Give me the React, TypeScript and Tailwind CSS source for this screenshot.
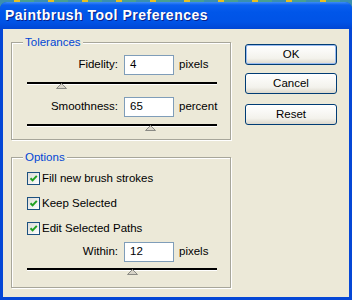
import React from 'react';

const font = "font-['Liberation_Sans',Arial,sans-serif]";

function Thumb() {
  return (
    <svg width="11" height="6" viewBox="0 0 11 6" className="block">
      <polygon points="5.5,0.5 10.5,5.5 0.5,5.5" fill="#d8d4c8" stroke="#8a8a84" strokeWidth="1" />
    </svg>
  );
}

function Slider({ pos }: { pos: number }) {
  return (
    <div className="relative h-[8px] w-[190px]">
      <div className="h-[2px] w-full bg-black" />
      <div className="h-px w-full bg-white" />
      <div className="absolute top-[1px]" style={{ left: pos - 5 }}>
        <Thumb />
      </div>
    </div>
  );
}

function NumberRow({ label, value, unit }: { label: string; value: string; unit: string }) {
  return (
    <div className="flex h-[20px] items-center">
      <span className="w-[91px] text-right text-black">{label}</span>
      <div className="ml-[6px] flex h-[20px] w-[50px] items-center border border-[#7f9db9] bg-white pl-[5px] text-black">
        {value}
      </div>
      <span className="ml-[5px] text-black">{unit}</span>
    </div>
  );
}

function Check({ label }: { label: string }) {
  return (
    <div className="flex h-[13px] items-center">
      <div className="flex h-[13px] w-[13px] items-center justify-center border border-[#1c5180] bg-[linear-gradient(135deg,#dcdcd7,#ffffff)]">
        <svg width="9" height="9" viewBox="0 0 9 9">
          <path d="M1.5 4.2 L3.6 6.4 L7.8 1.8" fill="none" stroke="#21a121" strokeWidth="2" />
        </svg>
      </div>
      <span className="ml-[2px] text-black">{label}</span>
    </div>
  );
}

function Group({ title, className, children }: { title: string; className: string; children: React.ReactNode }) {
  return (
    <div className={`relative w-[220px] border border-[#a7a69a] shadow-[inset_1px_1px_0_#fff,1px_1px_0_#fff] ${className}`}>
      <span className="absolute left-[11px] top-[-9px] bg-[#ece9d8] px-[2px] text-[#0046d5]">{title}</span>
      {children}
    </div>
  );
}

function Button({ label, primary }: { label: string; primary?: boolean }) {
  return (
    <button
      className={`flex h-[21px] w-[92px] items-center justify-center rounded-[3px] border border-[#003c74] bg-[linear-gradient(to_bottom,#ffffff,#f3f2ec_70%,#dcd8cc)] text-black ${
        primary ? 'shadow-[inset_0_0_0_1px_#9bbcf0]' : ''
      }`}
    >
      {label}
    </button>
  );
}

export default function App() {
  return (
    <div className={`h-[300px] w-[352px] overflow-hidden bg-[repeating-linear-gradient(90deg,#3a8fb0_0_14px,#e8c020_14px_20px,#4aa090_20px_34px)] text-[11.5px] ${font}`}>
      <div className="mt-[2px] flex h-[298px] flex-col rounded-t-[7px] bg-[#0547d6]">
        <div className="flex h-[27px] items-center rounded-t-[7px] bg-[linear-gradient(to_bottom,#3c8cf8_0px,#0a5fef_3px,#0056e9_10px,#0053e6_20px,#0046d4_27px)] pl-[5px]">
          <span className="text-[14px] font-bold tracking-[0.5px] text-white [text-shadow:1px_1px_#0a1f88]">
            Paintbrush Tool Preferences
          </span>
        </div>
        <div className="mx-[3px] mb-[3px] flex flex-1 bg-[#ece9d8]">
          <div className="flex flex-col pl-[8px] pt-[13px]">
            <Group title="Tolerances" className="h-[98px]">
              <div className="flex flex-col pl-[15px] pt-[12px]">
                <NumberRow label="Fidelity:" value="4" unit="pixels" />
                <div className="mt-[7px]">
                  <Slider pos={34} />
                </div>
                <div className="mt-[7px]">
                  <NumberRow label="Smoothness:" value="65" unit="percent" />
                </div>
                <div className="mt-[7px]">
                  <Slider pos={123} />
                </div>
              </div>
            </Group>
            <Group title="Options" className="mt-[17px] h-[131px]">
              <div className="flex flex-col pl-[15px] pt-[14px]">
                <Check label="Fill new brush strokes" />
                <div className="mt-[12px]">
                  <Check label="Keep Selected" />
                </div>
                <div className="mt-[12px]">
                  <Check label="Edit Selected Paths" />
                </div>
                <div className="mt-[7px]">
                  <NumberRow label="Within:" value="12" unit="pixels" />
                </div>
                <div className="mt-[6px]">
                  <Slider pos={105} />
                </div>
              </div>
            </Group>
          </div>
          <div className="ml-[14px] flex flex-col pt-[15px]">
            <Button label="OK" primary />
            <div className="mt-[8px]">
              <Button label="Cancel" />
            </div>
            <div className="mt-[10px]">
              <Button label="Reset" />
            </div>
          </div>
        </div>
      </div>
    </div>
  );
}
